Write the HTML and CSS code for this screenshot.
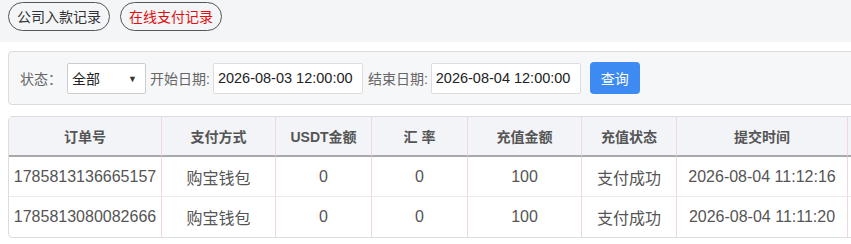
FILE: index.html
```
<html>
    <head>
        <title>在线支付记录</title>
        <link rel="stylesheet" href="styles.css">
    </head>

    <body>
        <div class="tabs">
            <a class="tab">公司入款记录</a>
            <a class="tab active">在线支付记录</a>
        </div>
        <main>
            <form class="filter">
                <span class="label">状态：</span>
                <div class="select">全部<span class="arrow">&#9660;</span></div>
                <span class="label">开始日期:</span>
                <input type="text" value="2026-08-03 12:00:00" />
                <span class="label">结束日期:</span>
                <input type="text" value="2026-08-04 12:00:00" />
                <button type="button">查询</button>
            </form>

            <table class="records">
                <thead>
                    <tr>
                        <th class="c1">订单号</th>
                        <th class="c2">支付方式</th>
                        <th class="c3">USDT金额</th>
                        <th class="c4">汇 率</th>
                        <th class="c5">充值金额</th>
                        <th class="c6">充值状态</th>
                        <th class="c7">提交时间</th>
                        <th class="c8"></th>
                    </tr>
                </thead>
                <tbody>
                    <tr>
                        <td>1785813136665157</td>
                        <td>购宝钱包</td>
                        <td>0</td>
                        <td>0</td>
                        <td>100</td>
                        <td>支付成功</td>
                        <td>2026-08-04 11:12:16</td>
                        <td></td>
                    </tr>
                    <tr>
                        <td>1785813080082666</td>
                        <td>购宝钱包</td>
                        <td>0</td>
                        <td>0</td>
                        <td>100</td>
                        <td>支付成功</td>
                        <td>2026-08-04 11:11:20</td>
                        <td></td>
                    </tr>
                </tbody>
            </table>
        </main>
    </body>
</html>
```

FILE: styles.css
```
/* Page */
body {
    margin: 0;
    overflow: hidden;
    font-family: "Liberation Sans", "Noto Sans CJK SC", sans-serif;
    color: #555;
    background-color: #fff;
}

/* Tabs on top */
.tabs {
    display: flex;
    gap: 10px;
    height: 42px;
    padding: 2px 8px 0;
    box-sizing: border-box;
    background-color: #f4f5f7;
}

.tab {
    display: block;
    height: 29px;
    line-height: 28px;
    padding: 0 8px;
    font-size: 14px;
    color: #333;
    border: 1px solid #555;
    border-radius: 15px;
    box-sizing: border-box;
}

.tab.active {
    color: #e01010;
}

/* Main section */
main {
    width: 1000px;
    padding: 9px 8px 0;
}

/* Filter bar */
.filter {
    display: flex;
    align-items: center;
    margin: 0;
    height: 54px;
    padding: 0 11px;
    box-sizing: border-box;
    background-color: #f6f7f9;
    border: 1px solid #dcdcdc;
    border-radius: 4px;
}

.label {
    font-size: 14px;
    color: #666;
}

.select {
    position: relative;
    width: 79px;
    height: 31px;
    line-height: 31px;
    margin: 0 4px 0 5px;
    padding-left: 4px;
    box-sizing: border-box;
    font-size: 14px;
    color: #222;
    background-color: #fff;
    border: 1px solid #ccc;
    border-radius: 2px;
}

.arrow {
    position: absolute;
    right: 8px;
    top: 0;
    font-size: 9px;
    color: #333;
}

input {
    width: 150px;
    height: 31px;
    margin: 0 5px 0 3px;
    padding: 0 4px;
    box-sizing: border-box;
    font-family: "Liberation Sans", sans-serif;
    font-size: 14.5px;
    color: #222;
    border: 1px solid #ddd;
    border-radius: 2px;
}

button {
    width: 50px;
    height: 32px;
    margin-left: 4px;
    font-family: "Liberation Sans", "Noto Sans CJK SC", sans-serif;
    font-size: 14px;
    color: white;
    background-color: #3d8bf2;
    border: none;
    border-radius: 4px;
}

/* Records table */
.records {
    margin-top: 11px;
    border-spacing: 0;
    border: 1px solid #ddd;
    border-radius: 4px;
    table-layout: fixed;
}

.records th,
.records td {
    height: 40px;
    padding: 0 4px;
    text-align: center;
    border-right: 1px solid #f0d8dd;
    border-bottom: 1px solid #eaeaea;
    white-space: nowrap;
}

.records th {
    font-size: 14px;
    font-weight: bold;
    color: #555;
    background-color: #f2f4f7;
    border-bottom: 2px solid #a9a9a9;
}

.records td {
    font-size: 16px;
    color: #555;
}

.records tbody tr:last-child td {
    border-bottom: none;
}

.c1 { width: 144px; }
.c2 { width: 105px; }
.c3 { width: 87px; }
.c4 { width: 87px; }
.c5 { width: 105px; }
.c6 { width: 86px; }
.c7 { width: 162px; }
.c8 { width: 100px; }
```
